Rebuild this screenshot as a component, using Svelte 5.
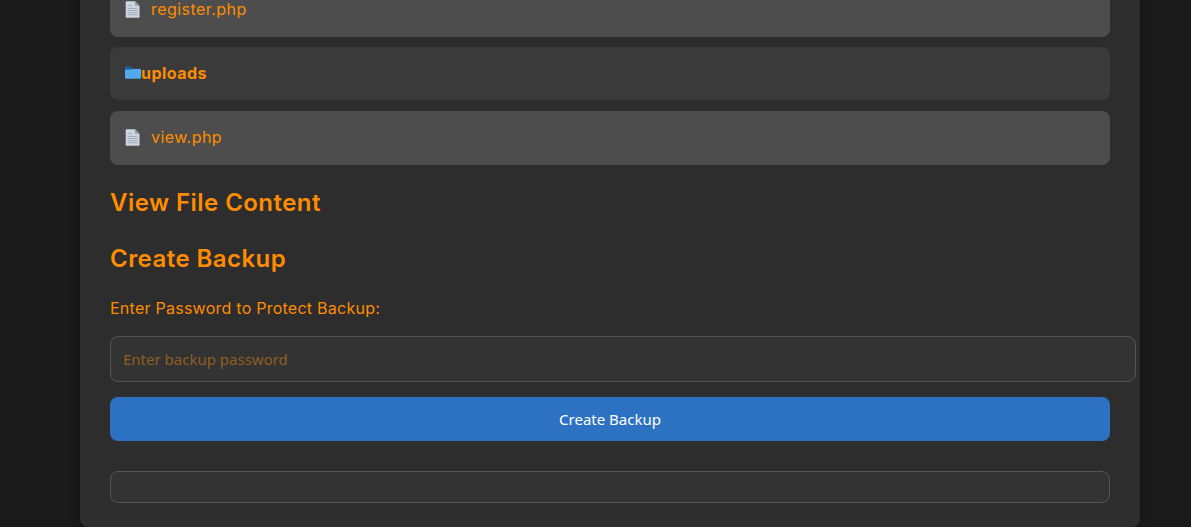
<script>
  const files = [
    { name: "register.php", dir: false },
    { name: "uploads", dir: true },
    { name: "view.php", dir: false },
  ];
</script>

<div class="page">
  <main class="container">
    <ul class="files">
      {#each files as file}
        <li class="file" class:dir={file.dir}>
          {#if file.dir}
            <svg class="folder" viewBox="0 0 16 13" width="16" height="13">
              <path d="M0 1.6 Q0 .2 1.2 .2 H5.4 L7.6 2.4 H14.6 Q16 2.4 16 3.8 V7 H0 Z" fill="#1f5f99" />
              <path d="M0 4.6 Q0 3.6 1 3.6 H6 L7.4 2.9 H15 Q16 2.9 16 3.9 V11.6 Q16 12.8 14.8 12.8 H1.2 Q0 12.8 0 11.6 Z" fill="#53a8ee" />
            </svg>
            <strong>{file.name}</strong>
          {:else}
            <svg class="doc" viewBox="0 0 14 16" width="15" height="17">
              <path d="M.6 1 Q.6 .2 1.4 .2 H9.4 L13.6 4.4 V15 Q13.6 15.8 12.8 15.8 H1.4 Q.6 15.8 .6 15 Z" fill="#ccd6e0" />
              <path d="M9.4 .2 L13.6 4.4 H10.2 Q9.4 4.4 9.4 3.6 Z" fill="#8d9aa6" />
              <path d="M2.6 4.5 H7 M2.6 7 H11.6 M2.6 9 H11.6 M2.6 11 H11.6 M2.6 13 H11.6" stroke="#a3afba" stroke-width="1" />
            </svg>
            <span class="link">{file.name}</span>
          {/if}
        </li>
      {/each}
    </ul>

    <h2>View File Content</h2>
    <h2>Create Backup</h2>

    <form on:submit|preventDefault>
      <label for="backup-password">Enter Password to Protect Backup:</label>
      <input id="backup-password" type="password" placeholder="Enter backup password" />
      <button type="submit">Create Backup</button>
    </form>

    <div class="output"></div>
  </main>
</div>

<style>
  :global(body) {
    background: #1a1a1a;
    font-family: "Inter", "Liberation Sans", sans-serif;
  }

  .page {
    height: 100vh;
    overflow: hidden;
    display: flex;
    flex-direction: column;
    justify-content: flex-end;
    align-items: flex-start;
  }

  .container {
    width: 1000px;
    margin-left: 80px;
    padding: 0 30px 24px;
    flex-shrink: 0;
    background: #2d2d2d;
    border-radius: 8px;
    box-shadow: 0 0 10px rgba(0, 0, 0, 0.3);
  }

  .files {
    list-style: none;
    margin: 0;
    padding: 0;
  }

  .file {
    height: 54px;
    margin-bottom: 10px;
    padding: 0 15px 2px;
    display: flex;
    align-items: center;
    background: #4d4d4d;
    border-radius: 8px;
    color: #ff8c00;
    font-size: 16px;
    box-sizing: border-box;
  }

  .file:last-child {
    margin-bottom: 0;
  }

  .file.dir {
    height: 53px;
    margin-bottom: 11px;
    background: #3a3a3a;
  }

  .doc {
    margin-right: 11px;
    flex-shrink: 0;
  }

  .folder {
    flex-shrink: 0;
  }

  .link {
    letter-spacing: 0.45px;
  }

  strong {
    font-weight: 700;
    font-size: 16px;
    letter-spacing: 0.45px;
  }

  h2 {
    margin: 23px 0 0;
    height: 33px;
    color: #ff8c00;
    font-size: 24px;
    line-height: 33px;
    font-weight: 600;
    letter-spacing: 0.45px;
  }

  .files + h2 {
    margin-top: 21px;
  }

  form {
    margin-top: 21px;
  }

  label {
    display: block;
    color: #ff8c00;
    font-size: 16px;
    line-height: 24px;
    margin-bottom: 16px;
    letter-spacing: 0.25px;
  }

  input {
    display: block;
    width: 100%;
    height: 20px;
    padding: 12px;
    margin: 0;
    box-sizing: content-box;
    background: #333333;
    border: 1px solid #555555;
    border-radius: 8px;
    color: #ff8c00;
    font-family: "Noto Sans", sans-serif;
    font-size: 15px;
  }

  input::placeholder {
    color: #8f5f22;
    opacity: 1;
  }

  button {
    display: block;
    width: 100%;
    height: 44px;
    margin-top: 15px;
    border: 0;
    border-radius: 8px;
    background: #2d72c2;
    color: #ffffff;
    font-family: "Noto Sans", sans-serif;
    font-size: 15px;
  }

  .output {
    height: 32px;
    margin-top: 30px;
    box-sizing: border-box;
    background: #333333;
    border: 1px solid #555555;
    border-radius: 8px;
  }
</style>
